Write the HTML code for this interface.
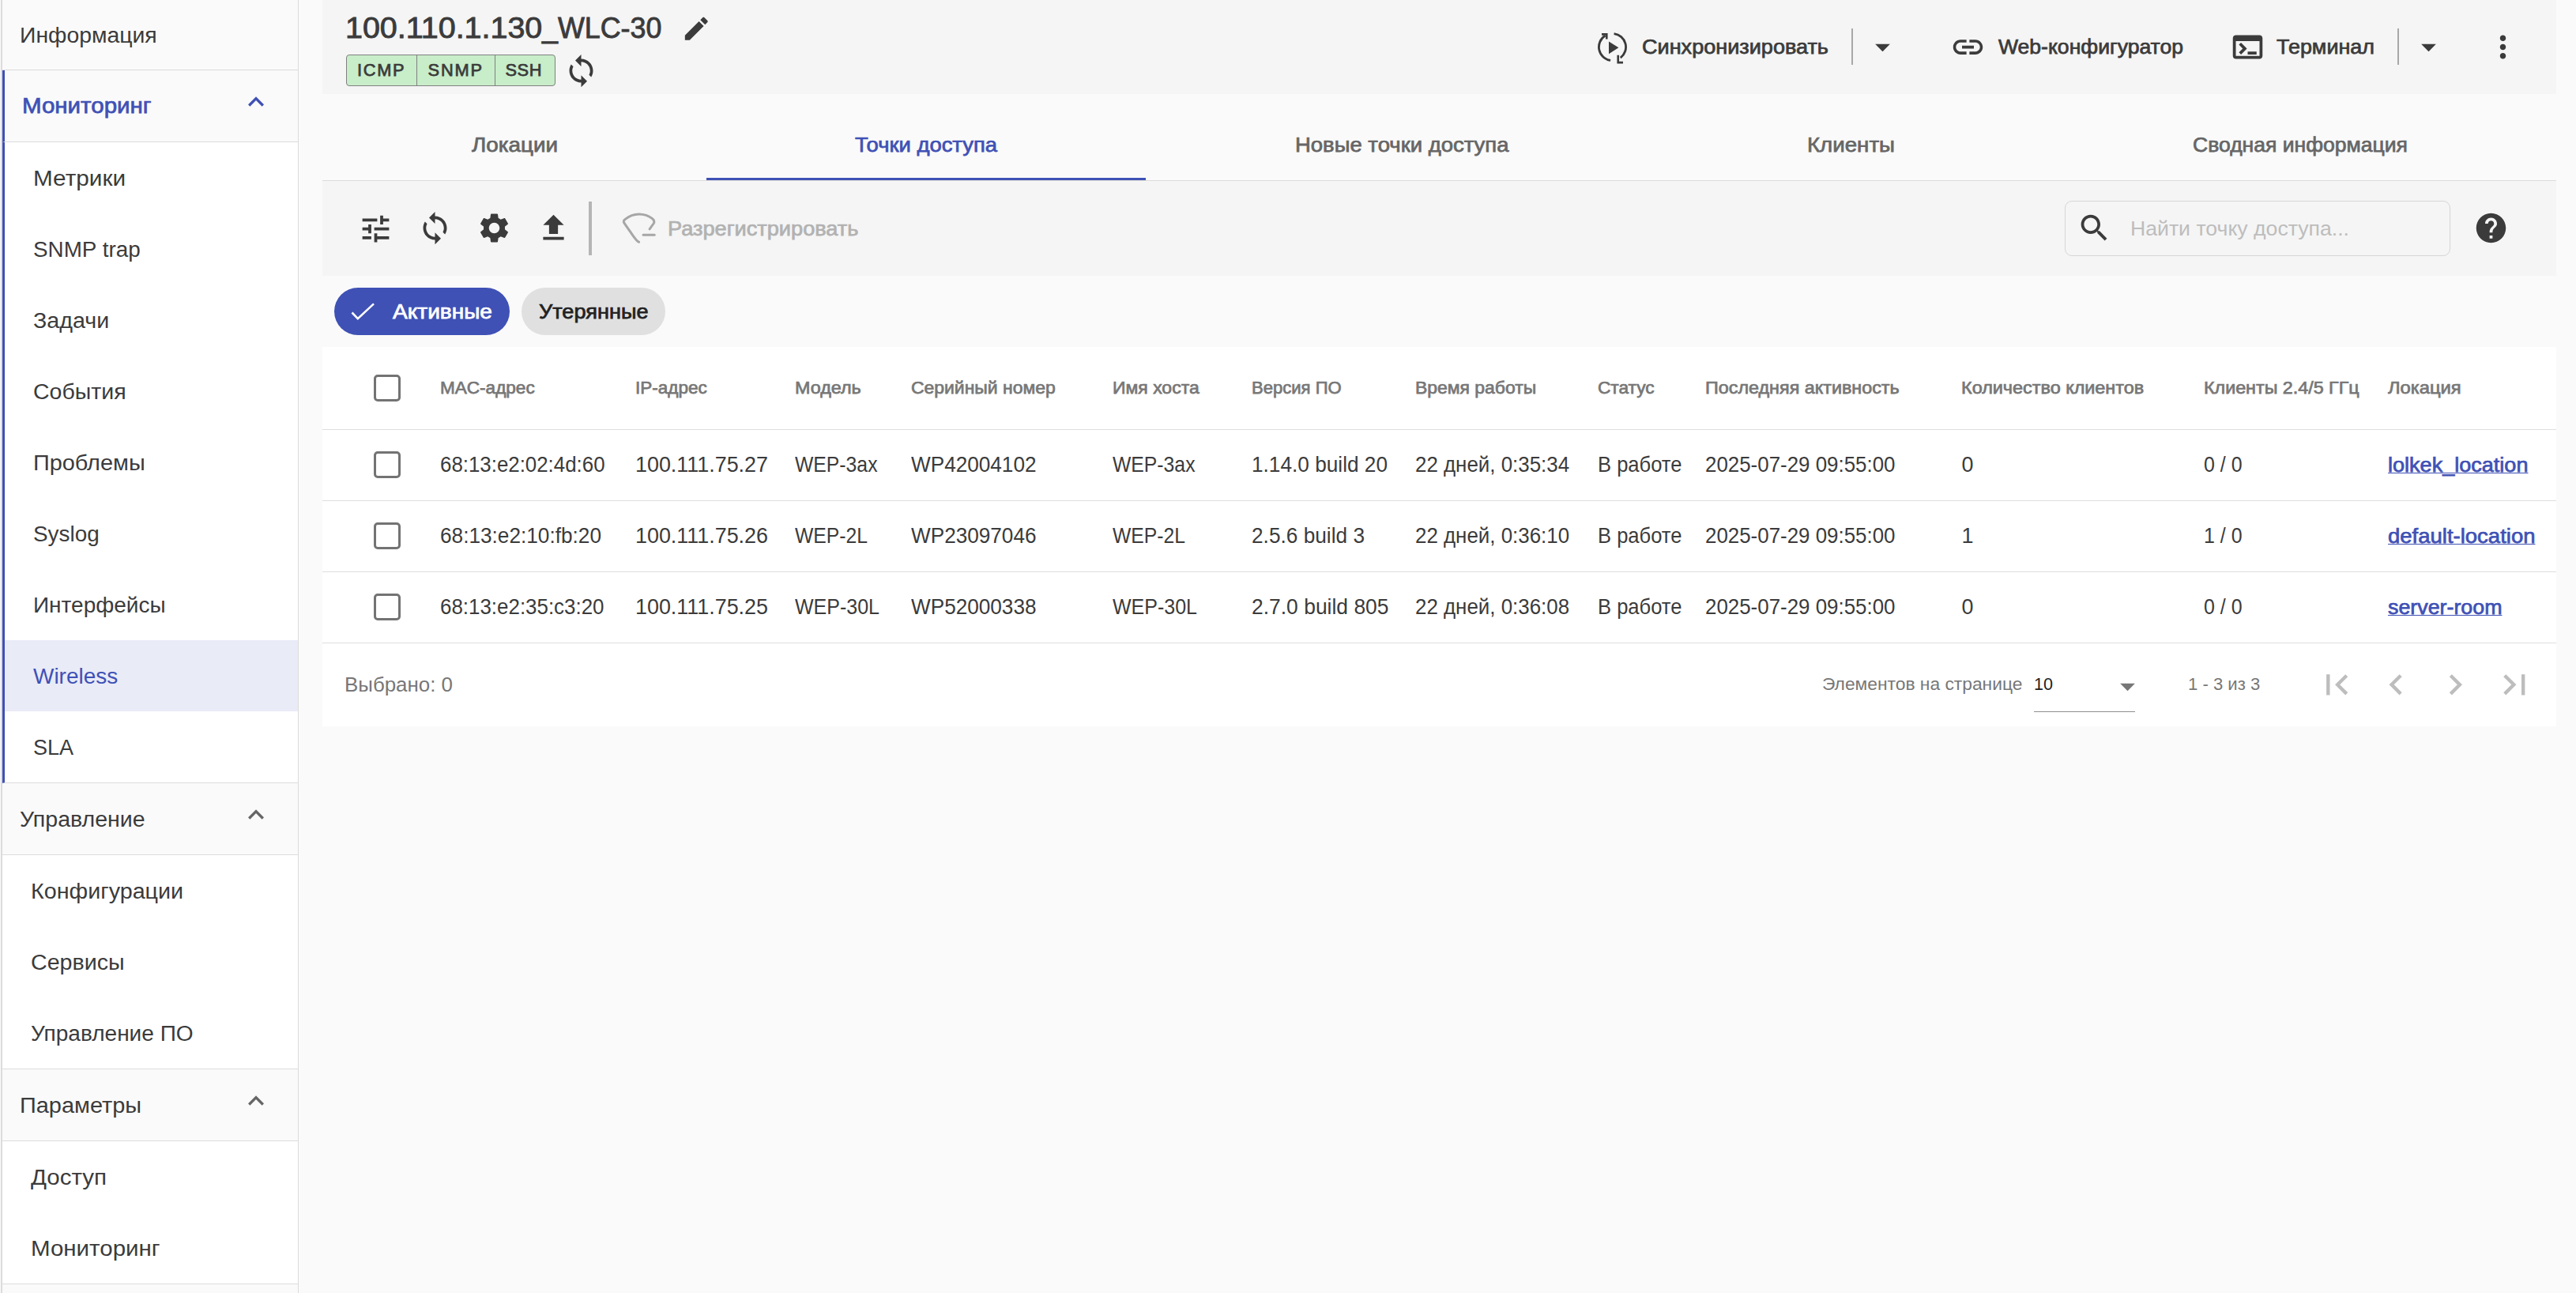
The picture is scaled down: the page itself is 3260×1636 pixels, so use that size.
<!DOCTYPE html>
<html lang="ru"><head><meta charset="utf-8"><title>Wireless</title>
<style>
*{box-sizing:border-box}
html,body{margin:0;padding:0}
html{width:3260px;height:1636px;overflow:hidden}
body{width:3260px;height:1636px;overflow:hidden;background:#fafafa;font-family:"Liberation Sans",sans-serif;font-size:26.25px;color:#3b3b3b;position:relative}
span{white-space:pre}
.ic{position:absolute;display:block}
.abs{position:absolute}
.m{-webkit-text-stroke:.75px currentColor}
/* ---------- sidebar ---------- */
#side{position:absolute;left:1px;top:-2px;width:377px;height:1638px;overflow:hidden;border-left:2px solid #dcdcdc;border-right:1px solid #dcdcdc;background:#fafafa;font-size:28.4px}
#side .hd{position:relative;height:91px;border-bottom:1px solid #dcdcdc;padding-left:23px;display:flex;align-items:center;background:#fafafa}
#side .grp{background:#fff;border-bottom:1px solid #dcdcdc}
#side .it{height:90px;padding-left:37.5px;display:flex;align-items:center}
#side .grp.act{border-left:3px solid #3f51b5}
#side .hd.act{border-left:3px solid #3f51b5;color:#3f51b5;font-size:28.125px}
#side .it.sel{background:#e9ebf7;color:#3f51b5}
#side .hd .ic{left:301px;top:20px;width:40px;height:40px;fill:#666}
#side .hd.act .ic{fill:#3f51b5;left:298px}
/* ---------- main ---------- */
#main{position:absolute;left:408px;top:0;width:2827px;height:919px}
#top{position:absolute;left:0;top:0;width:2827px;height:118.5px;background:#f5f5f5}
#tabs{position:absolute;left:0;top:118.5px;width:2827px;height:110.5px;border-bottom:1px solid #dcdcdc;display:flex;align-items:flex-end;color:#666}
#tabs .tab{flex:0 0 auto;height:91px;display:flex;align-items:center;justify-content:center;position:relative;padding-top:2px}
#tabs .tab.on{color:#3f51b5}
#tabs .tab.on:after{content:"";position:absolute;left:0;right:0;bottom:0;height:3px;background:#3f51b5}
#bar{position:absolute;left:0;top:229px;width:2827px;height:119.5px;background:#f5f5f5}
#search{position:absolute;left:2205px;top:25px;width:488px;height:70px;border:1px solid #d6d6d6;border-radius:9px}
.chip{position:absolute;top:364px;height:60px;border-radius:30px;display:flex;align-items:center}
#tbl{position:absolute;left:0;top:439px;width:2827px;height:479.5px;background:#fff}
table{border-collapse:collapse;table-layout:fixed;width:2827px}
th,td{padding:0;text-align:left;font-weight:400;border-bottom:1px solid #dedede;vertical-align:middle}
th{height:104px;font-size:22.5px;color:#777}
td{height:90px;font-size:26.9px}
.cb{display:block;width:34px;height:34px;border:3px solid #737373;border-radius:5px;margin-left:65px}
a{color:#3f51b5;text-decoration:none}
a>span>span{text-decoration:underline;text-decoration-thickness:1.1px;text-underline-offset:1.3px}
#foot{position:absolute;left:0;top:375px;width:2827px;height:104.5px;font-size:22.7px;color:#777}
</style></head>
<body>
<nav id="side">
<div class="hd" style="padding-top:3px"><span style="display:inline-block;width:171.5px;margin-left:-1.06px;margin-right:1.06px;"><span style="display:inline-block;transform-origin:0 50%;transform:scaleX(0.9989)">Информация</span></span></div>
<div class="hd act"><span class="m" style="display:inline-block;width:161.5px;margin-left:-1.05px;margin-right:1.05px;"><span style="display:inline-block;transform-origin:0 50%;transform:scaleX(1.0494)">Мониторинг</span></span><svg class="ic" viewBox="0 0 24 24"><path d="M12 8l-6 6 1.41 1.41L12 10.83l4.59 4.58L18 14z"/></svg></div>
<div class="grp act">
<div class="it"><span style="display:inline-block;width:115.0px;margin-left:-1.06px;margin-right:1.06px;"><span style="display:inline-block;transform-origin:0 50%;transform:scaleX(1.0481)">Метрики</span></span></div>
<div class="it"><span style="display:inline-block;width:133.5px;margin-left:-1.06px;margin-right:1.06px;"><span style="display:inline-block;transform-origin:0 50%;transform:scaleX(0.9805)">SNMP trap</span></span></div>
<div class="it"><span style="display:inline-block;width:94.0px;margin-left:-1.06px;margin-right:1.06px;"><span style="display:inline-block;transform-origin:0 50%;transform:scaleX(1.0084)">Задачи</span></span></div>
<div class="it"><span style="display:inline-block;width:115.5px;margin-left:-1.06px;margin-right:1.06px;"><span style="display:inline-block;transform-origin:0 50%;transform:scaleX(1.0036)">События</span></span></div>
<div class="it"><span style="display:inline-block;width:139.5px;margin-left:-1.06px;margin-right:1.06px;"><span style="display:inline-block;transform-origin:0 50%;transform:scaleX(1.0171)">Проблемы</span></span></div>
<div class="it"><span style="display:inline-block;width:81.5px;margin-left:-1.06px;margin-right:1.06px;"><span style="display:inline-block;transform-origin:0 50%;transform:scaleX(0.9814)">Syslog</span></span></div>
<div class="it"><span style="display:inline-block;width:165.5px;margin-left:-1.06px;margin-right:1.06px;"><span style="display:inline-block;transform-origin:0 50%;transform:scaleX(0.9862)">Интерфейсы</span></span></div>
<div class="it sel"><span style="display:inline-block;width:105.0px;margin-left:-1.06px;margin-right:1.06px;"><span style="display:inline-block;transform-origin:0 50%;transform:scaleX(0.9843)">Wireless</span></span></div>
<div class="it"><span style="display:inline-block;width:49.0px;margin-left:-1.06px;margin-right:1.06px;"><span style="display:inline-block;transform-origin:0 50%;transform:scaleX(0.9526)">SLA</span></span></div>
</div>
<div class="hd"><span style="display:inline-block;width:156.5px;margin-left:-1.06px;margin-right:1.06px;"><span style="display:inline-block;transform-origin:0 50%;transform:scaleX(1.0051)">Управление</span></span><svg class="ic" viewBox="0 0 24 24"><path d="M12 8l-6 6 1.41 1.41L12 10.83l4.59 4.58L18 14z"/></svg></div>
<div class="grp">
<div class="it"><span style="display:inline-block;width:191.0px;margin-left:-1.06px;margin-right:1.06px;"><span style="display:inline-block;transform-origin:0 50%;transform:scaleX(1.0111)">Конфигурации</span></span></div>
<div class="it"><span style="display:inline-block;width:116.5px;margin-left:-1.06px;margin-right:1.06px;"><span style="display:inline-block;transform-origin:0 50%;transform:scaleX(1.0085)">Сервисы</span></span></div>
<div class="it"><span style="display:inline-block;width:203.5px;margin-left:-1.06px;margin-right:1.06px;"><span style="display:inline-block;transform-origin:0 50%;transform:scaleX(0.9876)">Управление ПО</span></span></div>
</div>
<div class="hd"><span style="display:inline-block;width:152.0px;margin-left:-1.06px;margin-right:1.06px;"><span style="display:inline-block;transform-origin:0 50%;transform:scaleX(1.0184)">Параметры</span></span><svg class="ic" viewBox="0 0 24 24"><path d="M12 8l-6 6 1.41 1.41L12 10.83l4.59 4.58L18 14z"/></svg></div>
<div class="grp">
<div class="it"><span style="display:inline-block;width:94.0px;margin-left:-1.06px;margin-right:1.06px;"><span style="display:inline-block;transform-origin:0 50%;transform:scaleX(1.0399)">Доступ</span></span></div>
<div class="it"><span style="display:inline-block;width:161.5px;margin-left:-1.06px;margin-right:1.06px;"><span style="display:inline-block;transform-origin:0 50%;transform:scaleX(1.0392)">Мониторинг</span></span></div>
</div>
<div class="hd"></div>
</nav>
<main id="main">
<header id="top">
<div class="abs" style="left:30.5px;top:12.5px;font-size:37.5px;line-height:45px;color:#3b3b3b;-webkit-text-stroke:.9px #3b3b3b"><span style="display:inline-block;width:246.5px;margin-left:-1.41px;margin-right:1.41px;"><span style="display:inline-block;transform-origin:0 50%;transform:scaleX(1.0518)">100.110.1.130</span></span><span style="display:inline-block;width:2.3px"></span><span style="display:inline-block;width:148.5px;margin-left:-1.41px;margin-right:1.41px;"><span style="display:inline-block;transform-origin:0 50%;transform:scaleX(0.9553)">_WLC-30</span></span></div>
<svg class="ic" viewBox="0 0 24 24" style="left:453.75px;top:16.95px;width:38.5px;height:38.5px;fill:#3b3b3b;"><path d="M3 17.25V21h3.75L17.81 9.94l-3.75-3.75L3 17.25zM20.71 7.04c.39-.39.39-1.02 0-1.41l-2.34-2.34c-.39-.39-1.02-.39-1.41 0l-1.83 1.83 3.75 3.75 1.83-1.83z"/></svg><div class="abs" style="left:30px;top:69px;height:40px;width:265px;border:1px solid #808080;border-radius:4px;background:#c8edc9;overflow:hidden;font-size:21.8px;line-height:38px;color:#3b3b3b"><span class="abs m" style="left:13px"><span style="letter-spacing:1.667px;">ICMP</span></span><i class="abs" style="left:87.5px;top:0;width:1px;height:40px;background:#808080"></i><span class="abs m" style="left:102.5px"><span style="letter-spacing:1.839px;">SNMP</span></span><i class="abs" style="left:186.5px;top:0;width:1px;height:40px;background:#808080"></i><span class="abs m" style="left:200.5px"><span style="letter-spacing:0.586px;">SSH</span></span></div>
<svg class="ic" viewBox="0 0 24 24" style="left:305.00px;top:67.00px;width:45px;height:45px;fill:#3b3b3b;"><path d="M12 4V1L8 5l4 4V6c3.31 0 6 2.69 6 6 0 1.01-.25 1.97-.7 2.8l1.46 1.46C19.54 15.03 20 13.57 20 12c0-4.42-3.58-8-8-8zm0 14c-3.31 0-6-2.69-6-6 0-1.01.25-1.97.7-2.8L5.24 7.74C4.46 8.97 4 10.43 4 12c0 4.42 3.58 8 8 8v3l4-4-4-4v3z"/></svg><svg class="ic" viewBox="0 0 24 24" style="left:1610px;top:36.85px;width:45px;height:45px;fill:none;stroke:#3b3b3b;stroke-width:1.5"><path d="M10.73 21.01A9.1 9.1 0 0 1 7.18 4.28M13.11 2.97A9.1 9.1 0 0 1 17.48 19.27"/><path d="M4.8 3.4H8.15V6.6M15.85 17.5V22.45H19.2" stroke-width="1.4"/><path d="M9.6 8.2V16.7L16.2 12.45z" fill="#3b3b3b" stroke="none"/></svg><div class="abs m" style="left:1670.5px;top:43px;line-height:32px;font-size:26.25px"><span style="display:inline-block;width:234.0px;margin-left:-0.98px;margin-right:0.98px;"><span style="display:inline-block;transform-origin:0 50%;transform:scaleX(1.0310)">Синхронизировать</span></span></div><i class="abs" style="left:1935px;top:36px;width:2px;height:46px;background:#a8a8a8"></i><svg class="ic" viewBox="0 0 24 24" style="left:1951.50px;top:36.80px;width:45px;height:45px;fill:#3b3b3b;"><path d="M7 10l5 5 5-5z"/></svg><svg class="ic" viewBox="0 0 24 24" style="left:2059.80px;top:36.80px;width:45px;height:45px;fill:#3b3b3b;"><path d="M3.9 12c0-1.71 1.39-3.1 3.1-3.1h4V7H7c-2.76 0-5 2.24-5 5s2.24 5 5 5h4v-1.9H7c-1.71 0-3.1-1.39-3.1-3.1zM8 13h8v-2H8v2zm9-6h-4v1.9h4c1.71 0 3.1 1.39 3.1 3.1s-1.39 3.1-3.1 3.1h-4V17h4c2.76 0 5-2.24 5-5s-2.24-5-5-5z"/></svg><div class="abs m" style="left:2122px;top:43px;line-height:32px;font-size:26.25px"><span style="display:inline-block;width:232.0px;margin-left:-0.98px;margin-right:0.98px;"><span style="display:inline-block;transform-origin:0 50%;transform:scaleX(1.0114)">Web-конфигуратор</span></span></div><svg class="ic" viewBox="0 0 24 24" style="left:2414.00px;top:37.00px;width:45px;height:45px;fill:#3b3b3b;"><path d="M20 4H4c-1.11 0-2 .9-2 2v12c0 1.1.89 2 2 2h16c1.1 0 2-.9 2-2V6c0-1.1-.89-2-2-2zm0 14H4V8h16v10zm-2-1h-6v-2h6v2zM7.5 17l-1.41-1.41L8.67 13l-2.59-2.59L7.5 9l4 4-4 4z"/></svg><div class="abs m" style="left:2474px;top:43px;line-height:32px;font-size:26.25px"><span style="display:inline-block;width:122.0px;margin-left:-0.98px;margin-right:0.98px;"><span style="display:inline-block;transform-origin:0 50%;transform:scaleX(1.0255)">Терминал</span></span></div><i class="abs" style="left:2626px;top:36px;width:2px;height:46px;background:#a8a8a8"></i><svg class="ic" viewBox="0 0 24 24" style="left:2643.25px;top:36.80px;width:45px;height:45px;fill:#3b3b3b;"><path d="M7 10l5 5 5-5z"/></svg><svg class="ic" viewBox="0 0 24 24" style="left:2737.25px;top:37.00px;width:45px;height:45px;fill:#3b3b3b;"><path d="M12 8c1.1 0 2-.9 2-2s-.9-2-2-2-2 .9-2 2 .9 2 2 2zm0 2c-1.1 0-2 .9-2 2s.9 2 2 2 2-.9 2-2-.9-2-2-2zm0 6c-1.1 0-2 .9-2 2s.9 2 2 2 2-.9 2-2-.9-2-2-2z"/></svg></header>
<div id="tabs"><div class="tab m" style="width:486px"><span style="display:inline-block;width:107.0px;margin-left:-0.98px;margin-right:0.98px;"><span style="display:inline-block;transform-origin:0 50%;transform:scaleX(1.0594)">Локации</span></span></div><div class="tab m on" style="width:556px"><span style="display:inline-block;width:178.0px;margin-left:-0.98px;margin-right:0.98px;"><span style="display:inline-block;transform-origin:0 50%;transform:scaleX(1.0438)">Точки доступа</span></span></div><div class="tab m" style="width:648px"><span style="display:inline-block;width:268.5px;margin-left:-0.98px;margin-right:0.98px;"><span style="display:inline-block;transform-origin:0 50%;transform:scaleX(1.0466)">Новые точки доступа</span></span></div><div class="tab m" style="width:488px"><span style="display:inline-block;width:109.0px;margin-left:-0.98px;margin-right:0.98px;"><span style="display:inline-block;transform-origin:0 50%;transform:scaleX(1.0542)">Клиенты</span></span></div><div class="tab m" style="width:649px"><span style="display:inline-block;width:270.0px;margin-left:-0.98px;margin-right:0.98px;"><span style="display:inline-block;transform-origin:0 50%;transform:scaleX(1.0108)">Сводная информация</span></span></div></div>
<div id="bar"><svg class="ic" viewBox="0 0 24 24" style="left:44.50px;top:37.50px;width:45px;height:45px;fill:#3b3b3b;"><path d="M3 17v2h6v-2H3zM3 5v2h10V5H3zm10 16v-2h8v-2h-8v-2h-2v6h2zM7 9v2H3v2h4v2h2V9H7zm14 4v-2H11v2h10zm-6-4h2V7h4V5h-4V3h-2v6z"/></svg><svg class="ic" viewBox="0 0 24 24" style="left:119.50px;top:37.00px;width:45px;height:45px;fill:#3b3b3b;"><path d="M12 4V1L8 5l4 4V6c3.31 0 6 2.69 6 6 0 1.01-.25 1.97-.7 2.8l1.46 1.46C19.54 15.03 20 13.57 20 12c0-4.42-3.58-8-8-8zm0 14c-3.31 0-6-2.69-6-6 0-1.01.25-1.97.7-2.8L5.24 7.74C4.46 8.97 4 10.43 4 12c0 4.42 3.58 8 8 8v3l4-4-4-4v3z"/></svg><svg class="ic" viewBox="0 0 24 24" style="left:194.50px;top:37.00px;width:45px;height:45px;fill:#3b3b3b;"><path d="M19.14 12.94c.04-.3.06-.61.06-.94 0-.32-.02-.64-.07-.94l2.03-1.58c.18-.14.23-.41.12-.61l-1.92-3.32c-.12-.22-.37-.29-.59-.22l-2.39.96c-.5-.38-1.03-.7-1.62-.94l-.36-2.54c-.04-.24-.24-.41-.48-.41h-3.84c-.24 0-.43.17-.47.41l-.36 2.54c-.59.24-1.13.57-1.62.94l-2.39-.96c-.22-.08-.47 0-.59.22L2.74 8.87c-.12.21-.08.47.12.61l2.03 1.58c-.05.3-.09.63-.09.94s.02.64.07.94l-2.03 1.58c-.18.14-.23.41-.12.61l1.92 3.32c.12.22.37.29.59.22l2.39-.96c.5.38 1.03.7 1.62.94l.36 2.54c.05.24.24.41.48.41h3.84c.24 0 .44-.17.47-.41l.36-2.54c.59-.24 1.13-.56 1.62-.94l2.39.96c.22.08.47 0 .59-.22l1.92-3.32c.12-.22.07-.47-.12-.61l-2.01-1.58zM12 15.6c-1.98 0-3.6-1.62-3.6-3.6s1.62-3.6 3.6-3.6 3.6 1.62 3.6 3.6-1.62 3.6-3.6 3.6z"/></svg><svg class="ic" viewBox="0 0 24 24" style="left:269.50px;top:36.50px;width:45px;height:45px;fill:#3b3b3b;"><path d="M9 16h6v-6h4l-7-7-7 7h4zm-4 2h14v2H5z"/></svg><i class="abs" style="left:337px;top:26px;width:4px;height:68px;background:#b5b5b5"></i><svg class="ic" viewBox="0 0 70 70" style="left:367px;top:26px;width:70px;height:70px;fill:none;stroke:#a6a6a6;stroke-width:3;stroke-linecap:round;stroke-linejoin:round"><path d="M33.6 51.2C30.5 50.5 27 44.5 21.7 36.8L15.4 27.8Q12.8 24.6 16.2 22.4Q24 16 33.6 16Q43.5 16 50.6 21.7Q54.3 24.5 52 28L47.1 34.9M39 42.2H53.3"/></svg><div class="abs m" style="left:438px;top:43.5px;line-height:32px;color:#b2b2b2"><span style="display:inline-block;width:239.5px;margin-left:-0.98px;margin-right:0.98px;"><span style="display:inline-block;transform-origin:0 50%;transform:scaleX(1.0345)">Разрегистрировать</span></span></div><div id="search"><svg class="ic" viewBox="0 0 24 24" style="left:14.00px;top:11.00px;width:45px;height:45px;fill:#3b3b3b;"><path d="M15.5 14h-.79l-.28-.27C15.41 12.59 16 11.11 16 9.5 16 5.91 13.09 3 9.5 3S3 5.91 3 9.5 5.91 16 9.5 16c1.61 0 3.09-.59 4.23-1.57l.27.28v.79l5 4.99L20.49 19l-4.99-5zm-6 0C7.01 14 5 11.99 5 9.5S7.01 5 9.5 5 14 7.01 14 9.5 11.99 14 9.5 14z"/></svg><div class="abs" style="left:83px;top:17.5px;line-height:32px;color:#bdbdbd;font-size:26.5px"><span style="display:inline-block;width:275.0px;margin-left:-0.99px;margin-right:0.99px;"><span style="display:inline-block;transform-origin:0 50%;transform:scaleX(1.0050)">Найти точку доступа...</span></span></div></div><svg class="ic" viewBox="0 0 24 24" style="left:2722.00px;top:37.00px;width:45px;height:45px;fill:#3b3b3b;"><path d="M12 2C6.48 2 2 6.48 2 12s4.48 10 10 10 10-4.48 10-10S17.52 2 12 2zm1 17h-2v-2h2v2zm2.07-7.75l-.9.92C13.45 12.9 13 13.5 13 15h-2v-.5c0-1.1.45-2.1 1.17-2.83l1.24-1.26c.37-.36.59-.86.59-1.41 0-1.1-.9-2-2-2s-2 .9-2 2H8c0-2.21 1.79-4 4-4s4 1.79 4 4c0 .88-.36 1.68-.93 2.25z"/></svg></div>
<div class="chip" style="left:15px;width:222px;background:#3f51b5;color:#fff"><svg class="ic" viewBox="0 0 30 24" style="left:21px;top:18px;width:30px;height:24px;fill:none;stroke:#fff;stroke-width:2.6"><path d="M1.5 13.5L8.8 21.2L29 2.4"/></svg><span class="abs m" style="left:75px;top:14px;line-height:32px"><span style="display:inline-block;width:124.0px;margin-left:-0.98px;margin-right:0.98px;"><span style="display:inline-block;transform-origin:0 50%;transform:scaleX(1.0685)">Активные</span></span></span></div>
<div class="chip" style="left:252px;width:182px;background:#e0e0e0;color:#222"><span class="abs m" style="left:23px;top:14px;line-height:32px"><span style="display:inline-block;width:136.5px;margin-left:-0.98px;margin-right:0.98px;"><span style="display:inline-block;transform-origin:0 50%;transform:scaleX(1.0335)">Утерянные</span></span></span></div>
<div id="tbl"><table><colgroup><col style="width:150px"><col style="width:246.5px"><col style="width:202.5px"><col style="width:147px"><col style="width:255px"><col style="width:176px"><col style="width:207px"><col style="width:231px"><col style="width:136px"><col style="width:323.5px"><col style="width:307.5px"><col style="width:233px"><col style="width:212px"></colgroup>
<thead><tr><th><i class="cb"></i></th><th class="m"><span style="display:inline-block;width:118.0px;margin-left:-0.84px;margin-right:0.84px;"><span style="display:inline-block;transform-origin:0 50%;transform:scaleX(1.0022)">MAC-адрес</span></span></th><th class="m"><span style="display:inline-block;width:89.0px;margin-left:-0.84px;margin-right:0.84px;"><span style="display:inline-block;transform-origin:0 50%;transform:scaleX(1.0002)">IP-адрес</span></span></th><th class="m"><span style="display:inline-block;width:82.0px;margin-left:-0.84px;margin-right:0.84px;"><span style="display:inline-block;transform-origin:0 50%;transform:scaleX(1.0362)">Модель</span></span></th><th class="m"><span style="display:inline-block;width:181.0px;margin-left:-0.84px;margin-right:0.84px;"><span style="display:inline-block;transform-origin:0 50%;transform:scaleX(1.0191)">Серийный номер</span></span></th><th class="m"><span style="display:inline-block;width:108.0px;margin-left:-0.84px;margin-right:0.84px;"><span style="display:inline-block;transform-origin:0 50%;transform:scaleX(1.0212)">Имя хоста</span></span></th><th class="m"><span style="display:inline-block;width:112.0px;margin-left:-0.84px;margin-right:0.84px;"><span style="display:inline-block;transform-origin:0 50%;transform:scaleX(0.9803)">Версия ПО</span></span></th><th class="m"><span style="display:inline-block;width:151.5px;margin-left:-0.84px;margin-right:0.84px;"><span style="display:inline-block;transform-origin:0 50%;transform:scaleX(1.0188)">Время работы</span></span></th><th class="m"><span style="display:inline-block;width:70.0px;margin-left:-0.84px;margin-right:0.84px;"><span style="display:inline-block;transform-origin:0 50%;transform:scaleX(1.0077)">Статус</span></span></th><th class="m"><span style="display:inline-block;width:244.0px;margin-left:-0.84px;margin-right:0.84px;"><span style="display:inline-block;transform-origin:0 50%;transform:scaleX(1.0370)">Последняя активность</span></span></th><th class="m"><span style="display:inline-block;width:229.5px;margin-left:-0.84px;margin-right:0.84px;"><span style="display:inline-block;transform-origin:0 50%;transform:scaleX(1.0398)">Количество клиентов</span></span></th><th class="m"><span style="display:inline-block;width:195.0px;margin-left:-0.84px;margin-right:0.84px;"><span style="display:inline-block;transform-origin:0 50%;transform:scaleX(1.0350)">Клиенты 2.4/5 ГГц</span></span></th><th class="m"><span style="display:inline-block;width:91.0px;margin-left:-0.84px;margin-right:0.84px;"><span style="display:inline-block;transform-origin:0 50%;transform:scaleX(1.0559)">Локация</span></span></th></tr></thead>
<tbody>
<tr><td><i class="cb"></i></td><td><span style="display:inline-block;width:206.5px;margin-left:-1.01px;margin-right:1.01px;"><span style="display:inline-block;transform-origin:0 50%;transform:scaleX(0.9617)">68:13:e2:02:4d:60</span></span></td><td><span style="display:inline-block;width:166.0px;margin-left:-1.01px;margin-right:1.01px;"><span style="display:inline-block;transform-origin:0 50%;transform:scaleX(1.0002)">100.111.75.27</span></span></td><td><span style="display:inline-block;width:102.5px;margin-left:-1.01px;margin-right:1.01px;"><span style="display:inline-block;transform-origin:0 50%;transform:scaleX(0.9202)">WEP-3ax</span></span></td><td><span style="display:inline-block;width:156.5px;margin-left:-1.01px;margin-right:1.01px;"><span style="display:inline-block;transform-origin:0 50%;transform:scaleX(0.9727)">WP42004102</span></span></td><td><span style="display:inline-block;width:102.5px;margin-left:-1.01px;margin-right:1.01px;"><span style="display:inline-block;transform-origin:0 50%;transform:scaleX(0.9202)">WEP-3ax</span></span></td><td><span style="display:inline-block;width:170.0px;margin-left:-1.01px;margin-right:1.01px;"><span style="display:inline-block;transform-origin:0 50%;transform:scaleX(0.9749)">1.14.0 build 20</span></span></td><td><span style="display:inline-block;width:193.0px;margin-left:-1.01px;margin-right:1.01px;"><span style="display:inline-block;transform-origin:0 50%;transform:scaleX(0.9628)">22 дней, 0:35:34</span></span></td><td><span style="display:inline-block;width:104.5px;margin-left:-1.01px;margin-right:1.01px;"><span style="display:inline-block;transform-origin:0 50%;transform:scaleX(0.9505)">В работе</span></span></td><td><span style="display:inline-block;width:238.5px;margin-left:-1.01px;margin-right:1.01px;"><span style="display:inline-block;transform-origin:0 50%;transform:scaleX(0.9632)">2025-07-29 09:55:00</span></span></td><td><span style="display:inline-block;width:15.0px;"><span style="display:inline-block;transform-origin:0 50%;transform:scaleX(1.0000)">0</span></span></td><td><span style="display:inline-block;width:46.5px;margin-left:-1.01px;margin-right:1.01px;"><span style="display:inline-block;transform-origin:0 50%;transform:scaleX(0.9272)">0 / 0</span></span></td><td><a class="m" style="font-size:26.25px"><span style="display:inline-block;width:175.5px;margin-left:-0.98px;margin-right:0.98px;"><span style="display:inline-block;transform-origin:0 50%;transform:scaleX(1.0306)">lolkek_location</span></span></a></td></tr>
<tr><td><i class="cb"></i></td><td><span style="display:inline-block;width:202.0px;margin-left:-1.01px;margin-right:1.01px;"><span style="display:inline-block;transform-origin:0 50%;transform:scaleX(0.9746)">68:13:e2:10:fb:20</span></span></td><td><span style="display:inline-block;width:166.0px;margin-left:-1.01px;margin-right:1.01px;"><span style="display:inline-block;transform-origin:0 50%;transform:scaleX(1.0002)">100.111.75.26</span></span></td><td><span style="display:inline-block;width:90.0px;margin-left:-1.01px;margin-right:1.01px;"><span style="display:inline-block;transform-origin:0 50%;transform:scaleX(0.9190)">WEP-2L</span></span></td><td><span style="display:inline-block;width:156.5px;margin-left:-1.01px;margin-right:1.01px;"><span style="display:inline-block;transform-origin:0 50%;transform:scaleX(0.9727)">WP23097046</span></span></td><td><span style="display:inline-block;width:90.0px;margin-left:-1.01px;margin-right:1.01px;"><span style="display:inline-block;transform-origin:0 50%;transform:scaleX(0.9190)">WEP-2L</span></span></td><td><span style="display:inline-block;width:141.0px;margin-left:-1.01px;margin-right:1.01px;"><span style="display:inline-block;transform-origin:0 50%;transform:scaleX(0.9760)">2.5.6 build 3</span></span></td><td><span style="display:inline-block;width:193.0px;margin-left:-1.01px;margin-right:1.01px;"><span style="display:inline-block;transform-origin:0 50%;transform:scaleX(0.9628)">22 дней, 0:36:10</span></span></td><td><span style="display:inline-block;width:104.5px;margin-left:-1.01px;margin-right:1.01px;"><span style="display:inline-block;transform-origin:0 50%;transform:scaleX(0.9505)">В работе</span></span></td><td><span style="display:inline-block;width:238.5px;margin-left:-1.01px;margin-right:1.01px;"><span style="display:inline-block;transform-origin:0 50%;transform:scaleX(0.9632)">2025-07-29 09:55:00</span></span></td><td><span style="display:inline-block;width:15.0px;"><span style="display:inline-block;transform-origin:0 50%;transform:scaleX(1.0000)">1</span></span></td><td><span style="display:inline-block;width:46.5px;margin-left:-1.01px;margin-right:1.01px;"><span style="display:inline-block;transform-origin:0 50%;transform:scaleX(0.9272)">1 / 0</span></span></td><td><a class="m" style="font-size:26.25px"><span style="display:inline-block;width:184.5px;margin-left:-0.98px;margin-right:0.98px;"><span style="display:inline-block;transform-origin:0 50%;transform:scaleX(1.0473)">default-location</span></span></a></td></tr>
<tr><td><i class="cb"></i></td><td><span style="display:inline-block;width:205.5px;margin-left:-1.01px;margin-right:1.01px;"><span style="display:inline-block;transform-origin:0 50%;transform:scaleX(0.9638)">68:13:e2:35:c3:20</span></span></td><td><span style="display:inline-block;width:166.0px;margin-left:-1.01px;margin-right:1.01px;"><span style="display:inline-block;transform-origin:0 50%;transform:scaleX(1.0002)">100.111.75.25</span></span></td><td><span style="display:inline-block;width:105.0px;margin-left:-1.01px;margin-right:1.01px;"><span style="display:inline-block;transform-origin:0 50%;transform:scaleX(0.9300)">WEP-30L</span></span></td><td><span style="display:inline-block;width:156.5px;margin-left:-1.01px;margin-right:1.01px;"><span style="display:inline-block;transform-origin:0 50%;transform:scaleX(0.9727)">WP52000338</span></span></td><td><span style="display:inline-block;width:105.0px;margin-left:-1.01px;margin-right:1.01px;"><span style="display:inline-block;transform-origin:0 50%;transform:scaleX(0.9300)">WEP-30L</span></span></td><td><span style="display:inline-block;width:171.5px;margin-left:-1.01px;margin-right:1.01px;"><span style="display:inline-block;transform-origin:0 50%;transform:scaleX(0.9835)">2.7.0 build 805</span></span></td><td><span style="display:inline-block;width:193.0px;margin-left:-1.01px;margin-right:1.01px;"><span style="display:inline-block;transform-origin:0 50%;transform:scaleX(0.9628)">22 дней, 0:36:08</span></span></td><td><span style="display:inline-block;width:104.5px;margin-left:-1.01px;margin-right:1.01px;"><span style="display:inline-block;transform-origin:0 50%;transform:scaleX(0.9505)">В работе</span></span></td><td><span style="display:inline-block;width:238.5px;margin-left:-1.01px;margin-right:1.01px;"><span style="display:inline-block;transform-origin:0 50%;transform:scaleX(0.9632)">2025-07-29 09:55:00</span></span></td><td><span style="display:inline-block;width:15.0px;"><span style="display:inline-block;transform-origin:0 50%;transform:scaleX(1.0000)">0</span></span></td><td><span style="display:inline-block;width:46.5px;margin-left:-1.01px;margin-right:1.01px;"><span style="display:inline-block;transform-origin:0 50%;transform:scaleX(0.9272)">0 / 0</span></span></td><td><a class="m" style="font-size:26.25px"><span style="display:inline-block;width:142.5px;margin-left:-0.98px;margin-right:0.98px;"><span style="display:inline-block;transform-origin:0 50%;transform:scaleX(1.0211)">server-room</span></span></a></td></tr>
</tbody></table>
<div id="foot"><div class="abs" style="left:29px;top:36px;line-height:32px;font-size:26.5px"><span style="display:inline-block;width:135.0px;margin-left:-0.99px;margin-right:0.99px;"><span style="display:inline-block;transform-origin:0 50%;transform:scaleX(0.9770)">Выбрано: 0</span></span></div><div class="abs" style="left:1899px;top:36.5px;line-height:28px"><span style="display:inline-block;width:251.7px;margin-left:-0.85px;margin-right:0.85px;"><span style="display:inline-block;transform-origin:0 50%;transform:scaleX(1.0046)">Элементов на странице</span></span></div><div class="abs" style="left:2166px;top:36.5px;line-height:28px;color:#222"><span style="display:inline-block;width:24.0px;"><span style="display:inline-block;transform-origin:0 50%;transform:scaleX(0.9505)">10</span></span></div><i class="abs" style="left:2166px;top:85.5px;width:128px;height:1px;background:#8e8e8e"></i><svg class="ic" viewBox="0 0 24 24" style="left:2261.70px;top:31.50px;width:45px;height:45px;fill:#777;"><path d="M7 10l5 5 5-5z"/></svg><div class="abs" style="left:2361.5px;top:36.5px;line-height:28px"><span style="display:inline-block;width:89.5px;margin-left:-0.85px;margin-right:0.85px;"><span style="display:inline-block;transform-origin:0 50%;transform:scaleX(0.9733)">1 - 3 из 3</span></span></div><svg class="ic" viewBox="0 0 24 24" style="left:2522.75px;top:26.25px;width:52.5px;height:52.5px;fill:#bdbdbd;"><path d="M18.41 16.59L13.82 12l4.59-4.59L17 6l-6 6 6 6zM6 6h2v12H6z"/></svg><svg class="ic" viewBox="0 0 24 24" style="left:2598.25px;top:26.25px;width:52.5px;height:52.5px;fill:#bdbdbd;"><path d="M15.41 7.41L14 6l-6 6 6 6 1.41-1.41L10.83 12z"/></svg><svg class="ic" viewBox="0 0 24 24" style="left:2672.75px;top:26.25px;width:52.5px;height:52.5px;fill:#bdbdbd;"><path d="M10 6L8.59 7.41 13.17 12l-4.58 4.59L10 18l6-6z"/></svg><svg class="ic" viewBox="0 0 24 24" style="left:2747.75px;top:26.25px;width:52.5px;height:52.5px;fill:#bdbdbd;"><path d="M5.59 7.41L10.18 12l-4.59 4.59L7 18l6-6-6-6zM16 6h2v12h-2z"/></svg></div></div>
</main>
</body></html>
